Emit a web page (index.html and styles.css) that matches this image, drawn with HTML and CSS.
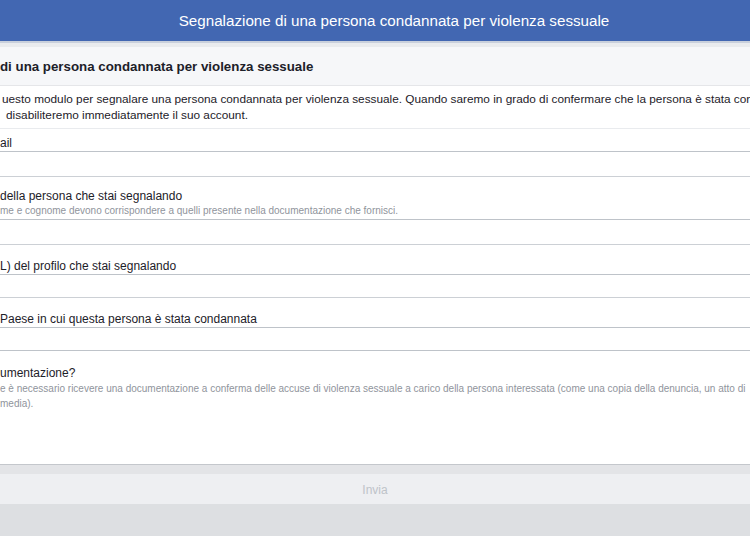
FILE: index.html
```html
<!DOCTYPE html>
<html lang="it">
<head>
<meta charset="utf-8">
<title>Segnalazione</title>
<link rel="stylesheet" href="styles.css">
</head>
<body>
<header class="topbar">
  <h1 class="topbar-title">Segnalazione di una persona condannata per violenza sessuale</h1>
</header>
<div class="strip"></div>
<main class="panel">
  <div class="panel-head">di una persona condannata per violenza sessuale</div>
  <div class="intro">
    <p class="intro-l1">uesto modulo per segnalare una persona condannata per violenza sessuale. Quando saremo in grado di confermare che la persona è stata condannata</p>
    <p class="intro-l2">disabiliteremo immediatamente il suo account.</p>
  </div>

  <div class="field">
    <div class="label label-h1"><span class="label-text">ail</span></div>
    <div class="input"></div>
  </div>

  <div class="field">
    <div class="label label-h2">
      <span class="label-text">della persona che stai segnalando</span>
      <span class="help">me e cognome devono corrispondere a quelli presente nella documentazione che fornisci.</span>
    </div>
    <div class="input"></div>
  </div>

  <div class="field">
    <div class="label label-h3"><span class="label-text">L) del profilo che stai segnalando</span></div>
    <div class="input input-short"></div>
  </div>

  <div class="field">
    <div class="label label-h3"><span class="label-text">Paese in cui questa persona è stata condannata</span></div>
    <div class="input input-short input-dark"></div>
  </div>

  <div class="doc">
    <span class="label-text">umentazione?</span>
    <span class="help">e è necessario ricevere una documentazione a conferma delle accuse di violenza sessuale a carico della persona interessata (come una copia della denuncia, un atto di</span>
    <span class="help">media).</span>
  </div>

  <footer class="panel-foot">
    <span class="send">Invia</span>
  </footer>
</main>
</body>
</html>
```

FILE: styles.css
```css
* { box-sizing: border-box; }
html, body {
  margin: 0;
  padding: 0;
  width: 750px;
  height: 536px;
  overflow: hidden;
  background: #dddfe2;
  font-family: "Liberation Sans", Arial, Helvetica, sans-serif;
  color: #1d2129;
}
.topbar {
  height: 41px;
  background: #4267b2;
  display: flex;
  align-items: center;
  justify-content: center;
  padding-left: 38px;
}
.topbar-title {
  margin: 0;
  font-size: 15.2px;
  font-weight: normal;
  color: #ffffff;
  white-space: nowrap;
}
.strip {
  height: 6px;
  background: #e9ebee;
  border-top: 2px solid #c9d0dc;
}
.panel {
  background: #ffffff;
  overflow: hidden;
}
.panel-head {
  height: 39px;
  background: #f6f7f9;
  border-bottom: 1px solid #e5e6e9;
  font-size: 13.3px;
  font-weight: bold;
  line-height: 39px;
  white-space: nowrap;
  color: #1d2129;
}
.intro {
  height: 43px;
  border-bottom: 1px solid #e9ebee;
  padding-top: 5px;
  font-size: 11.8px;
  line-height: 16px;
}
.intro p { margin: 0; white-space: nowrap; }
.intro-l1 { padding-left: 2px; }
.intro-l2 { padding-left: 6px; }
.field { display: flex; flex-direction: column; }
.label {
  display: flex;
  flex-direction: column;
  border-bottom: 1px solid #bec3c9;
  white-space: nowrap;
}
.label-h1 { height: 23px; padding-top: 7px; }
.label-h2 { height: 43px; padding-top: 12px; }
.label-h3 { height: 30px; padding-top: 14px; }
.label-text {
  font-size: 12px;
  line-height: 14px;
  color: #1d2129;
}
.help {
  font-size: 10px;
  line-height: 15px;
  color: #90949c;
  white-space: nowrap;
}
.input {
  height: 25px;
  border-bottom: 1px solid #ccd0d5;
}
.input-short { height: 23px; }
.input-dark { border-bottom-color: #bec3c9; }
.doc {
  height: 114px;
  padding-top: 15px;
  display: flex;
  flex-direction: column;
  border-bottom: 1px solid #c4c7cc;
  white-space: nowrap;
}
.doc .label-text { line-height: 14px; margin-bottom: 1px; }
.panel-foot {
  height: 39px;
  background: #eeeff2;
  border-top: 9px solid #e3e4e7;
  display: flex;
  align-items: center;
  justify-content: center;
}
.send {
  font-size: 12px;
  color: #bec3c9;
  margin-top: 2px;
}
```
